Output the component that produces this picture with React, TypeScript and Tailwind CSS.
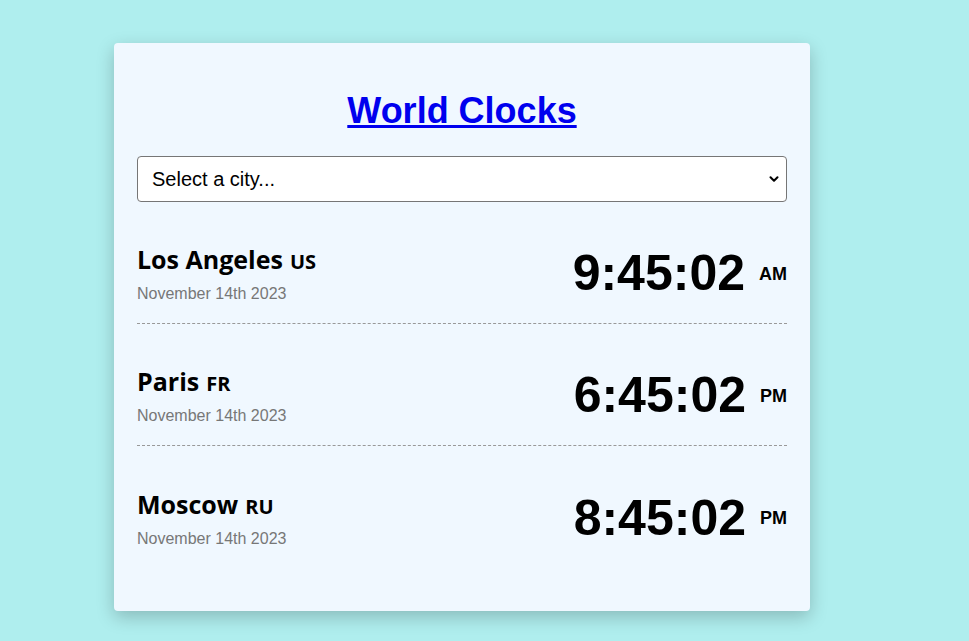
import { ChevronDown } from "lucide-react";

const clocks = [
  { city: "Los Angeles", code: "US", date: "November 14th 2023", time: "9:45:02", ampm: "AM" },
  { city: "Paris", code: "FR", date: "November 14th 2023", time: "6:45:02", ampm: "PM" },
  { city: "Moscow", code: "RU", date: "November 14th 2023", time: "8:45:02", ampm: "PM" },
];

const ClockRow = ({ city, code, date, time, ampm, last }: (typeof clocks)[number] & { last: boolean }) => (
  <div
    className={`flex h-[122px] items-center justify-between pt-[22px] ${
      last ? "" : "border-b border-dashed border-[#999]"
    }`}
  >
    <div className="flex flex-col">
      <div className="font-['Open_Sans',sans-serif] text-[25px] font-bold leading-[30px] text-black">
        {city}
        <span className="ml-[7px] text-[20px]">{code}</span>
      </div>
      <div className="mt-[8px] font-['Liberation_Sans',Arial,sans-serif] text-[16px] leading-[18px] text-[#777]">
        {date}
      </div>
    </div>
    <div className="flex items-center font-['Liberation_Sans',Arial,sans-serif] font-bold text-black">
      <span className="text-[50px] leading-[57px]">{time}</span>
      <span className="ml-[14px] text-[18px] leading-[20px]">{ampm}</span>
    </div>
  </div>
);

export default function App() {
  return (
    <div className="min-h-screen bg-[#afeeee] pt-[43px] pl-[114px]">
      <div className="w-[696px] rounded-[4px] bg-[#f0f8ff] px-[23px] pt-[47px] pb-[43px] shadow-[0_6px_18px_rgba(0,0,0,0.22)]">
        <h1 className="text-center font-['Liberation_Sans',Arial,sans-serif] text-[36px] font-bold leading-[41px]">
          <a href="#" className="text-[#0000ee] underline">
            World Clocks
          </a>
        </h1>
        <div className="relative mt-[25px]">
          <select className="h-[46px] w-full appearance-none rounded-[4px] border border-[#767676] bg-white pl-[14px] font-['Liberation_Sans',Arial,sans-serif] text-[20px] text-black outline-none">
            <option>Select a city...</option>
          </select>
          <ChevronDown
            className="pointer-events-none absolute right-[6px] top-1/2 h-[14px] w-[14px] -translate-y-1/2 text-black"
            strokeWidth={3.5}
          />
        </div>
        {clocks.map((c, i) => (
          <ClockRow key={c.city} {...c} last={i === clocks.length - 1} />
        ))}
      </div>
    </div>
  );
}
